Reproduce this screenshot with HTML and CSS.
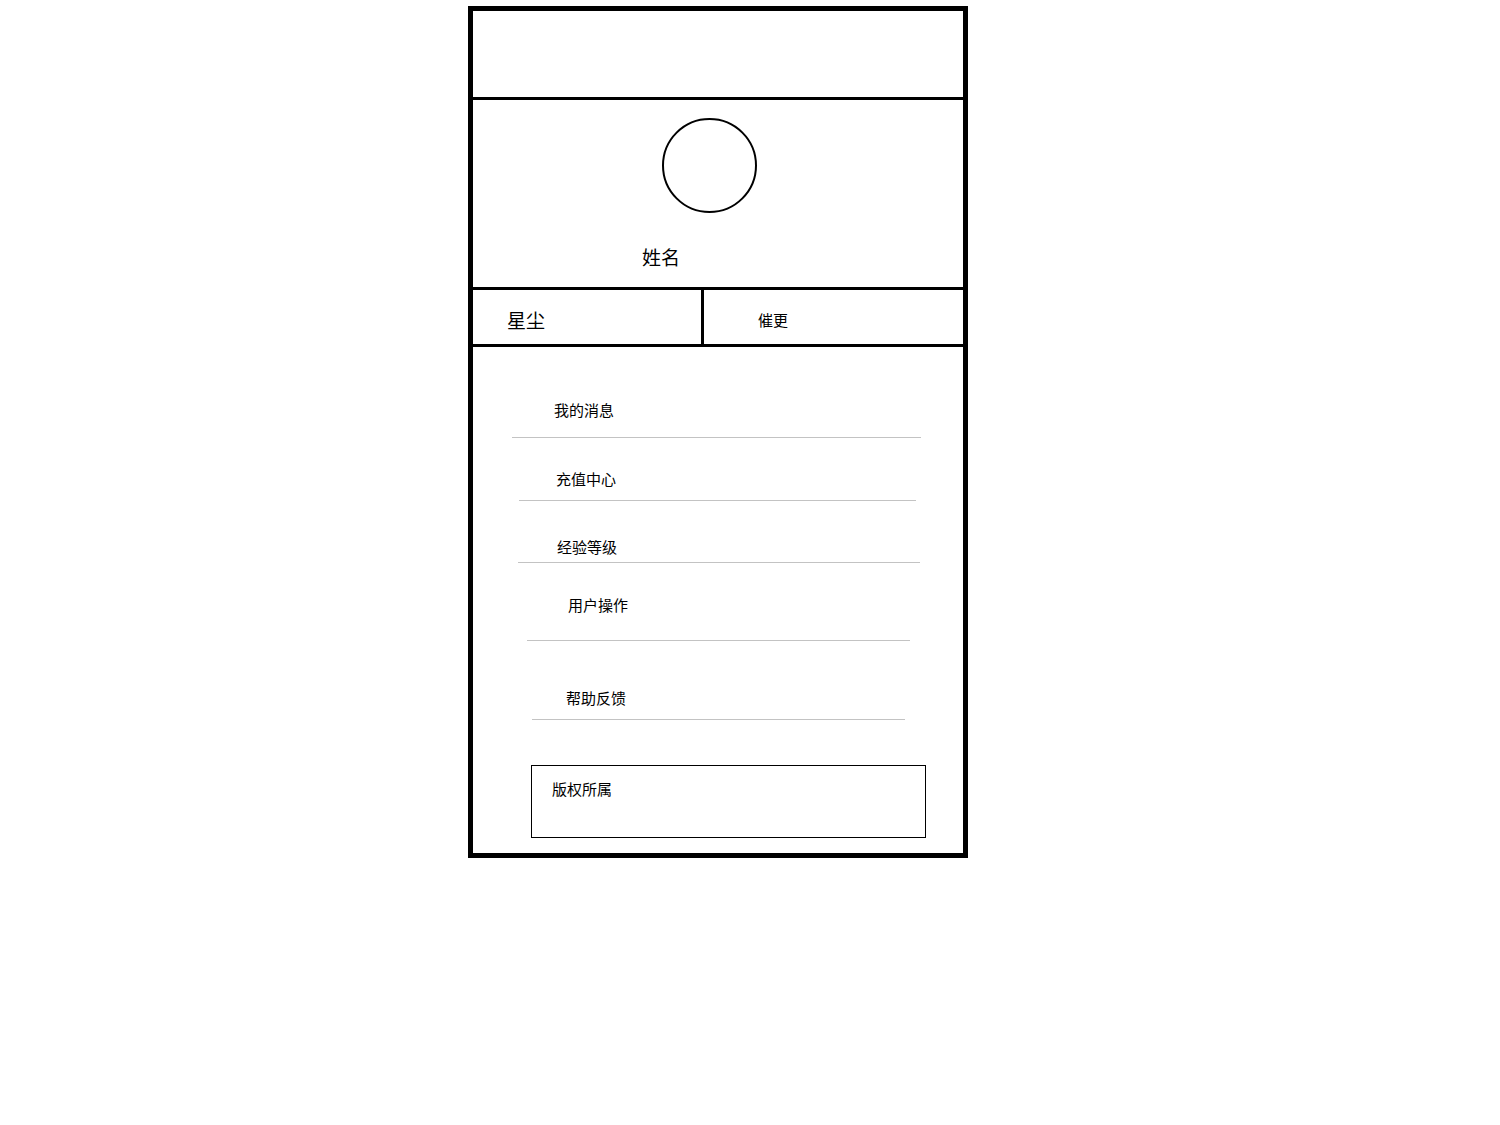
FILE: index.html
```html
<!DOCTYPE html>
<html lang="zh-CN">
<head>
  <meta charset="UTF-8" />
  <meta name="viewport" content="width=device-width, initial-scale=1.0"/>
  <title>个人中心</title>
  <link rel="stylesheet" href="styles.css">
</head>
<body>
  <div class="phone">
    <div class="topbar"></div>

    <div class="profile">
      <div class="avatar"></div>
      <div class="name">姓名</div>
    </div>

    <div class="stats">
      <div class="stat stat-left">星尘</div>
      <div class="stat stat-right">催更</div>
    </div>

    <div class="menu">
      <div class="menu-item">我的消息</div>
      <div class="menu-item">充值中心</div>
      <div class="menu-item">经验等级</div>
      <div class="menu-item">用户操作</div>
      <div class="menu-item">帮助反馈</div>
    </div>

    <div class="copyright">版权所属</div>
  </div>
</body>
</html>
```

FILE: styles.css
```css
* { margin: 0; padding: 0; box-sizing: border-box; }
body {
  font-family: "Noto Sans CJK SC", "Microsoft YaHei", sans-serif;
  background: #fff; color: #000;
}
.phone {
  width: 500px; height: 852px; margin: 6px 0 0 468px;
  border: 5px solid #000; display: flex; flex-direction: column;
}
.topbar { height: 89px; border-bottom: 3px solid #000; }

.profile { height: 190px; border-bottom: 3px solid #000; padding-top: 18px; }
.avatar { width: 95px; height: 95px; border: 2px solid #000; border-radius: 50%; margin-left: 189px; }
.name { font-size: 19px; line-height: 24px; margin-top: 32px; padding-left: 169px; }

.stats { display: flex; height: 57px; border-bottom: 3px solid #000; }
.stat { display: flex; align-items: center; padding-top: 4px; }
.stat-left { width: 231px; border-right: 3px solid #000; padding-left: 34px; font-size: 19px; }
.stat-right { flex: 1; padding-left: 54px; font-size: 15px; }

.menu-item { font-size: 15px; line-height: 20px; border-bottom: 1px solid #c3c3c3; }
.menu-item:nth-child(1) { margin: 0 42px 0 39px; padding: 53px 0 17px 42px; }
.menu-item:nth-child(2) { margin: 0 47px 0 46px; padding: 31px 0 11px 37px; }
.menu-item:nth-child(3) { margin: 0 43px 0 45px; padding: 36px 0 5px 39px; }
.menu-item:nth-child(4) { margin: 0 53px 0 54px; padding: 32px 0 25px 41px; }
.menu-item:nth-child(5) { margin: 0 58px 0 59px; padding: 47px 0 11px 34px; }

.copyright {
  margin: 45px 37px 0 58px; height: 73px; border: 1px solid #000;
  padding: 13px 0 0 20px; font-size: 15px; line-height: 20px;
}
```
